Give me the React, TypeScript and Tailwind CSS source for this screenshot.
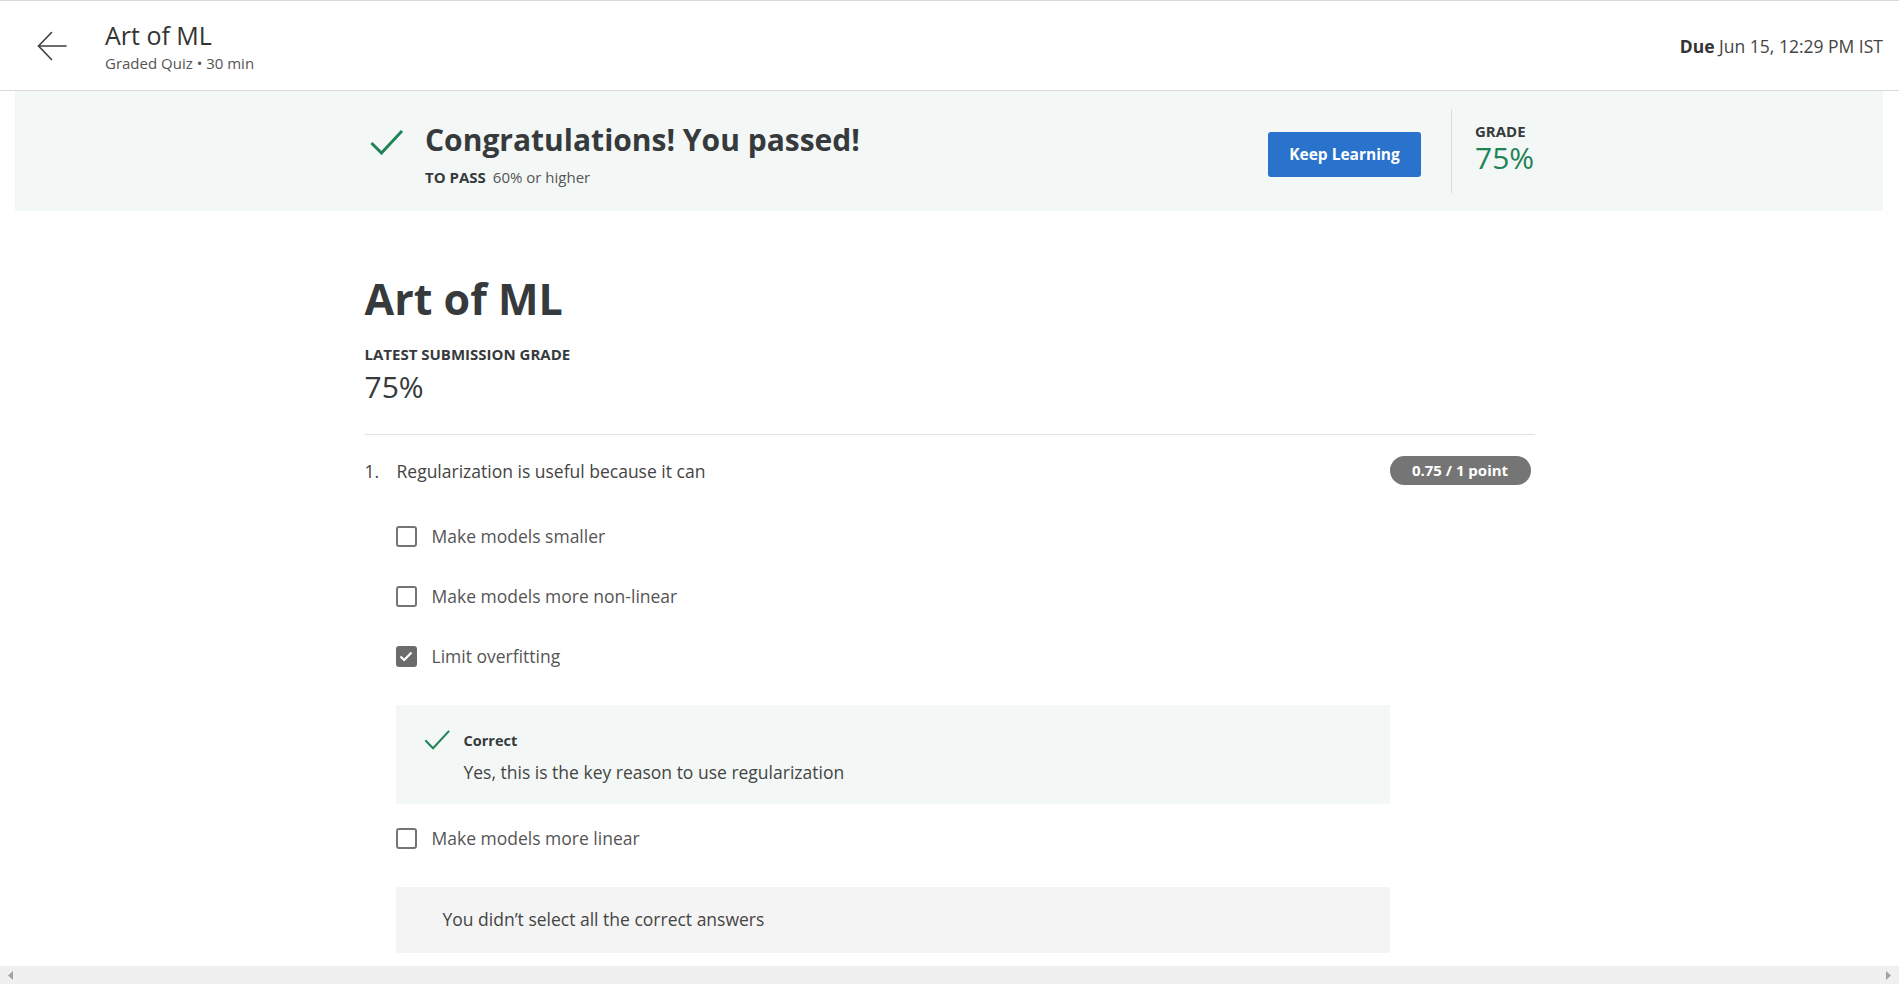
import React from "react";

function BackArrow() {
  return (
    <svg width="30" height="30" viewBox="0 0 30 30" fill="none" stroke="#3c3c3c" strokeWidth="1.6" strokeLinecap="round" strokeLinejoin="round">
      <path d="M29 15H1.5" />
      <path d="M14.5 1.5L1.5 15L14.5 28.5" />
    </svg>
  );
}

function Check({ w, h, sw }: { w: number; h: number; sw: number }) {
  return (
    <svg width={w} height={h} viewBox="0 0 33 26" fill="none" stroke="#1f8354" strokeWidth={sw} strokeLinecap="square">
      <path d="M2.5 15L11.5 24L31 3" />
    </svg>
  );
}

function Option({ label, checked }: { label: string; checked?: boolean }) {
  return (
    <div className="flex h-[60px] items-center gap-[15px]">
      {checked ? (
        <span className="flex h-[21px] w-[21px] items-center justify-center rounded-[3px] bg-[#6b6b6b]">
          <svg width="14" height="11" viewBox="0 0 14 11" fill="none" stroke="#fff" strokeWidth="2.2">
            <path d="M1.5 5.5L5.2 9L12.5 1.5" />
          </svg>
        </span>
      ) : (
        <span className="h-[21px] w-[21px] rounded-[3px] border-2 border-[#757575] bg-white" />
      )}
      <span className="text-[17.5px] leading-[24px] text-[#555]">{label}</span>
    </div>
  );
}

export default function App() {
  return (
    <div className="flex h-screen flex-col overflow-hidden bg-white font-['Open_Sans',sans-serif] text-[#373a3c]">
      <div className="flex-1 overflow-hidden">
        {/* header */}
        <header className="flex h-[91px] items-center border-t border-b border-[#d9d9d9] pr-[16px]">
          <div className="ml-[37px] flex w-[30px] items-center">
            <BackArrow />
          </div>
          <div className="ml-[38px] flex flex-col">
            <span className="text-[25px] leading-[30px] text-[#333]">Art of ML</span>
            <span className="mt-[4px] text-[15px] leading-[18px] text-[#555]">Graded Quiz • 30 min</span>
          </div>
          <div className="ml-auto text-[17.5px] leading-[24px] text-[#444]">
            <span className="font-bold text-[#333]">Due</span> Jun 15, 12:29 PM IST
          </div>
        </header>

        {/* banner */}
        <div className="mx-[15px] mr-[16px] h-[120px] bg-[#f3f8f6]">
          <div className="mx-auto flex h-full w-[1170px] items-center justify-between">
            <div className="flex items-start self-start pt-[30px]">
              <div className="ml-[6px] mt-[8px]">
                <Check w={33} h={26} sw={3} />
              </div>
              <div className="ml-[22px] flex flex-col">
                <h2 className="text-[30px] font-bold leading-[38px] text-[#373a3c]">Congratulations! You passed!</h2>
                <div className="mt-[8px] text-[15px] leading-[20px] text-[#555]">
                  <span className="font-bold text-[#373a3c]">TO PASS</span>
                  <span className="ml-[7px]">60% or higher</span>
                </div>
              </div>
            </div>
            <div className="flex items-center">
              <button className="mt-[7px] h-[45px] w-[153px] rounded-[3px] bg-[#2a73cc] text-[15.5px] font-bold text-white">
                Keep Learning
              </button>
              <div className="ml-[30px] h-[84px] w-px bg-[#dcdcdc]" />
              <div className="-mt-[4px] flex w-[82px] flex-col pl-[23px]">
                <span className="text-[15px] font-bold leading-[18px] text-[#373a3c]">GRADE</span>
                <span className="text-[30px] leading-[36px] text-[#1f8354]">75%</span>
              </div>
            </div>
          </div>
        </div>

        {/* main */}
        <main className="mx-auto w-[1170px] pt-[63px]">
          <h1 className="text-[43px] font-bold leading-[50px] text-[#373a3c]">Art of ML</h1>
          <div className="mt-[20px] text-[15px] font-bold leading-[20px] text-[#373a3c]">LATEST SUBMISSION GRADE</div>
          <div className="mt-[3px] text-[30px] leading-[40px] text-[#373a3c]">75%</div>
          <div className="mt-[27px] h-px bg-[#e1e1e1]" />

          <div className="mt-[21px] flex items-center">
            <span className="w-[32px] text-[17.5px] leading-[24px] text-[#444]">1.</span>
            <span className="text-[17.5px] leading-[24px] text-[#444]">Regularization is useful because it can</span>
            <span className="ml-auto mr-[4px] flex h-[29px] w-[141px] items-center justify-center rounded-full bg-[#757575] text-[15px] font-bold text-white">
              0.75 / 1 point
            </span>
          </div>

          <div className="ml-[31px] mt-[21px] w-[994px]">
            <Option label="Make models smaller" />
            <Option label="Make models more non-linear" />
            <Option label="Limit overfitting" checked />

            <div className="mt-[19px] h-[99px] bg-[#f3f8f6] pl-[28px] pt-[24px]">
              <div className="flex items-start">
                <Check w={26} h={21} sw={2.6} />
                <div className="ml-[14px] flex flex-col">
                  <span className="mt-[3px] text-[14.5px] font-bold leading-[18px] text-[#373a3c]">Correct</span>
                  <span className="mt-[10px] text-[17.5px] leading-[24px] text-[#444]">
                    Yes, this is the key reason to use regularization
                  </span>
                </div>
              </div>
            </div>

            <div className="mt-[4px]">
              <Option label="Make models more linear" />
            </div>

            <div className="mt-[19px] bg-[#f4f4f4] pb-[21px] pl-[47px] pt-[20px]">
              <span className="text-[17.5px] leading-[24px] text-[#444]">You didn’t select all the correct answers</span>
            </div>
          </div>
        </main>
      </div>

      {/* horizontal scrollbar */}
      <div className="flex h-[18px] shrink-0 items-center justify-between bg-[#f0f0f0] px-[8px]">
        <svg width="5" height="9" viewBox="0 0 5 9">
          <path d="M5 0V9L0 4.5Z" fill="#a3a3a3" />
        </svg>
        <svg width="5" height="9" viewBox="0 0 5 9">
          <path d="M0 0V9L5 4.5Z" fill="#a3a3a3" />
        </svg>
      </div>
    </div>
  );
}
